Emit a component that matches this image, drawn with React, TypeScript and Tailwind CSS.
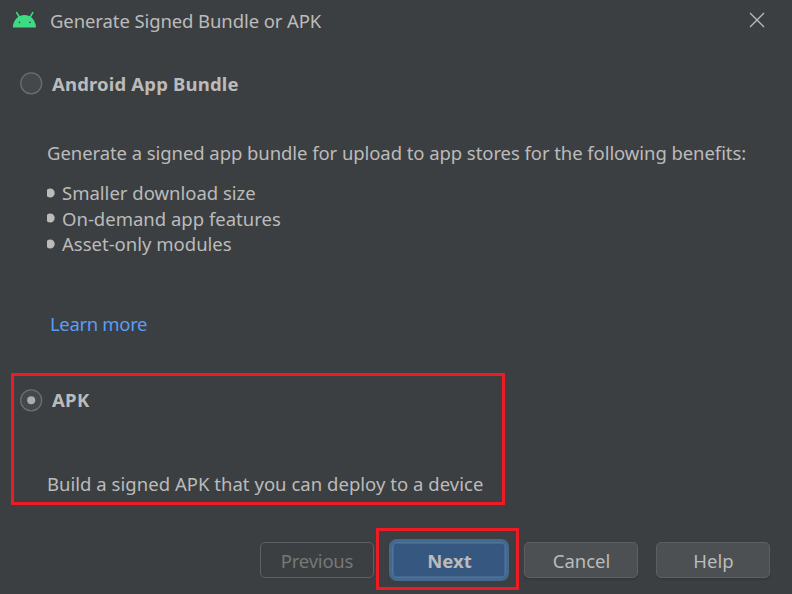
import type { ReactNode } from "react";

function AndroidIcon() {
  return (
    <svg width="24" height="18" viewBox="0 0 24 18" className="block">
      <path d="M4.700 1.700 7.300 6M20.800 1.700 18.200 6" stroke="#3ddc84" strokeWidth="1.600" strokeLinecap="round" />
      <path d="M.8 16.500C1.200 9 6 4 12.500 4S23.600 9 24 16.500Z" fill="#3ddc84" />
      <circle cx="7.500" cy="11.300" r=".9" fill="#2f5a45" />
      <circle cx="18" cy="11.300" r=".9" fill="#2f5a45" />
    </svg>
  );
}

function Radio({ checked = false }: { checked?: boolean }) {
  return (
    <svg width="23" height="23" viewBox="0 0 23 23" className="block shrink-0">
      <circle cx="11.200" cy="11.300" r="10.500" fill="#43494a" stroke="#6b6e6f" strokeWidth="1.300" />
      {checked && <circle cx="11.200" cy="11.300" r="4" fill="#adadad" />}
    </svg>
  );
}

function DialogButton({ children, disabled = false }: { children: ReactNode; disabled?: boolean }) {
  return (
    <button
      className={
        disabled
          ? "h-9 w-[114px] rounded-[5px] border border-[#5e6060] pt-[2px] tracking-[-0.22px] text-[#777777]"
          : "h-9 w-[114px] rounded-[5px] border border-[#5e6060] bg-[#4c5052] pt-[2px] pl-[1px] shadow-[0_2px_1px_#36393b]"
      }
    >
      {children}
    </button>
  );
}

const features = ["Smaller download size", "On-demand app features", "Asset-only modules"];

export default function App() {
  return (
    <main className="flex h-[594px] w-[792px] flex-col overflow-hidden bg-[#3c3f41] font-['Noto_Sans',sans-serif] text-[18.5px] leading-[26px] whitespace-nowrap text-[#bbbbbb]">
      <header className="flex h-10 shrink-0 items-center pl-3">
        <AndroidIcon />
        <span className="ml-[14px] pt-[2px] tracking-[-0.1px]">Generate Signed Bundle or APK</span>
        <svg width="16" height="16" viewBox="0 0 16 16" className="ml-auto mr-[27px]">
          <path d="M1 1 15 15M15 1 1 15" stroke="#bbbbbb" strokeWidth="1.300" />
        </svg>
      </header>
      <section className="flex h-[333px] shrink-0 flex-col pt-8">
        <label className="flex h-[23px] items-center gap-[9px] pl-5 font-bold">
          <Radio />
          <span className="tracking-[0.17px]">Android App Bundle</span>
        </label>
        <p className="mt-[45px] pl-[47px] tracking-[-0.07px]">
          Generate a signed app bundle for upload to app stores for the following benefits:
        </p>
        <ul className="mt-[14.3px] pl-[47px]">
          {features.map((feature) => (
            <li key={feature} className="flex h-[25.5px] items-center">
              <svg width="8" height="10" viewBox="0 0 8 10" className="mr-[7px] mb-[1px]">
                <circle cx="3.200" cy="5" r="4.500" fill="#bbbbbb" />
              </svg>
              {feature}
            </li>
          ))}
        </ul>
        <a className="mt-[54.2px] pl-[50px] tracking-[-0.34px] text-[#589df6]">Learn more</a>
      </section>
      <section className="ml-[11px] flex h-[132px] w-[494px] shrink-0 flex-col border-[3px] border-[#ed1c24] pt-[13px]">
        <label className="flex h-[23px] items-center gap-[9px] pl-[6px] font-bold">
          <Radio checked />
          <span className="pb-[2px] tracking-[0.3px]">APK</span>
        </label>
        <p className="mt-[59px] pl-[33px] tracking-[0.03px]">Build a signed APK that you can deploy to a device</p>
      </section>
      <footer className="mt-[23px] flex h-[62px] shrink-0 items-center pl-[260px]">
        <div className="pt-[2px]">
          <DialogButton disabled>Previous</DialogButton>
        </div>
        <div className="ml-[2px] flex h-[62px] w-[143px] shrink-0 items-center justify-center border-[3px] border-[#ed1c24] pt-[2px] pl-[2px]">
          <button className="h-[42px] w-[120px] rounded-[8px] border-[3px] border-[#43698e] bg-[#365880] pt-[2px] pl-[2px] font-bold shadow-[inset_0_0_0_1.5px_#4f749a]">
            Next
          </button>
        </div>
        <div className="ml-[5px] flex gap-[18px] pt-[2px]">
          <DialogButton>Cancel</DialogButton>
          <DialogButton>Help</DialogButton>
        </div>
      </footer>
    </main>
  );
}
